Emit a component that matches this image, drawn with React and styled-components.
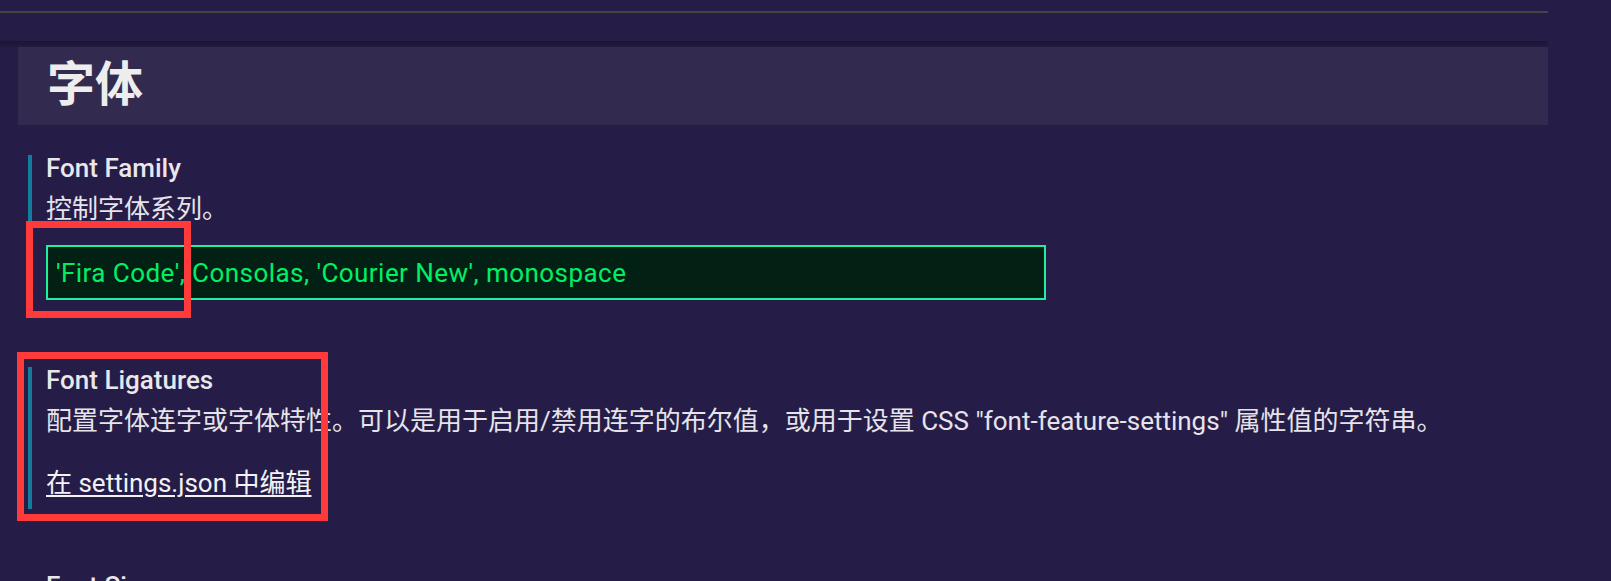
import React from 'react';
import styled, { createGlobalStyle } from 'styled-components';

const GlobalStyle = createGlobalStyle`
  html, body {
    margin: 0;
    padding: 0;
    background: #251d47;
    overflow: hidden;
  }
  body {
    font-family: Roboto, "Noto Sans CJK SC", sans-serif;
    color: #e8e6ec;
  }
`;

const Page = styled.div`
  position: relative;
  width: 1611px;
  height: 581px;
  overflow: hidden;
  background: #251d47;
`;

const Editor = styled.div`
  width: 1548px;
  display: flex;
  flex-direction: column;
`;

const TopRule = styled.div`
  margin-top: 11px;
  height: 2px;
  background: #474441;
`;

const StickyShadow = styled.div`
  margin-top: 28px;
  height: 6px;
  background: linear-gradient(to bottom, #1a1633, #221b40);
`;

const GroupHeader = styled.h2`
  margin: 0 0 0 18px;
  height: 78px;
  box-sizing: border-box;
  padding: 0 0 6px 29px;
  font-family: "Noto Sans", "Noto Sans CJK SC", sans-serif;
  line-height: 72px;
  font-size: 48px;
  font-weight: 700;
  color: #ededee;
  background: #322a4f;
`;

const SettingsList = styled.div`
  display: flex;
  flex-direction: column;
  gap: 64px;
  padding: 30px 0 0 28px;
`;

const SettingItem = styled.div`
  display: flex;
  flex-direction: column;
  align-items: flex-start;
  border-left: 4px solid ${(p) => (p.$modified ? '#127c9c' : 'transparent')};
  padding: 0 0 ${(p) => p.$bottom || 0}px 14px;
`;

const SettingTitle = styled.div`
  font-size: 26px;
  font-weight: 500;
  line-height: 26px;
  color: #e9e7ec;
`;

const SettingDescription = styled.div`
  margin-top: 10px;
  font-size: 26px;
  line-height: 36px;
  color: #e6e4ea;
`;

const TextInput = styled.div`
  margin-top: 18px;
  width: 1000px;
  box-sizing: border-box;
  height: 55px;
  padding: 8px 8px 0;
  border: 2px solid #1ef0a0;
  background: #022014;
  color: #00f064;
  font-size: 26px;
  letter-spacing: 0.45px;
  line-height: 36px;
  white-space: nowrap;
`;

const EditLink = styled.a`
  margin-top: 26px;
  font-size: 26px;
  line-height: 36px;
  color: #f2f2f4;
  text-decoration: underline;
  text-underline-offset: 3px;
  cursor: pointer;
`;

const Annotation = styled.div`
  position: absolute;
  box-sizing: border-box;
  border: 7px solid #fe3a3a;
  pointer-events: none;
`;

const App = () => {
  return (
    <Page>
      <GlobalStyle />
      <Editor>
        <TopRule />
        <StickyShadow />
        <GroupHeader>字体</GroupHeader>
        <SettingsList>
          <SettingItem $modified $bottom={3}>
            <SettingTitle>Font Family</SettingTitle>
            <SettingDescription>控制字体系列。</SettingDescription>
            <TextInput>'Fira Code', Consolas, 'Courier New', monospace</TextInput>
          </SettingItem>
          <SettingItem $modified $bottom={8}>
            <SettingTitle>Font Ligatures</SettingTitle>
            <SettingDescription>
              配置字体连字或字体特性。可以是用于启用/禁用连字的布尔值，或用于设置 CSS "font-feature-settings" 属性值的字符串。
            </SettingDescription>
            <EditLink>在 settings.json 中编辑</EditLink>
          </SettingItem>
          <SettingItem>
            <SettingTitle>Font Size</SettingTitle>
            <SettingDescription>控制字体大小(像素)。</SettingDescription>
          </SettingItem>
        </SettingsList>
      </Editor>
      <Annotation style={{ left: 26, top: 221, width: 165, height: 97 }} />
      <Annotation style={{ left: 17, top: 352, width: 311, height: 169 }} />
    </Page>
  );
};

export default App;
